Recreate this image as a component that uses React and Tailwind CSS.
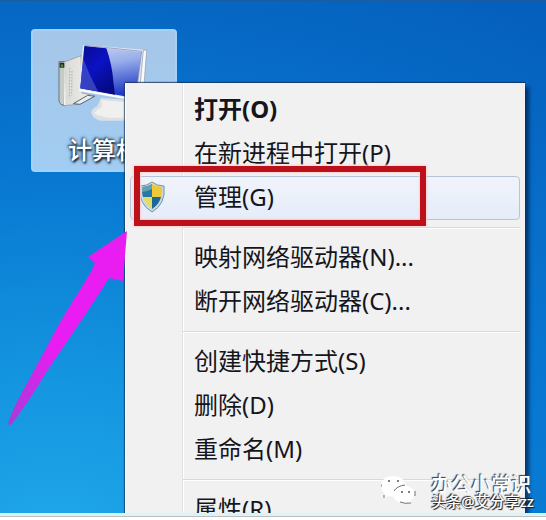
import { Fragment } from 'react';

const groups = [
	[
		{ label: '打开(O)', bold: true },
		{ label: '在新进程中打开(P)' },
		{ label: '管理(G)', shield: true, active: true },
	],
	[{ label: '映射网络驱动器(N)...' }, { label: '断开网络驱动器(C)...' }],
	[{ label: '创建快捷方式(S)' }, { label: '删除(D)' }, { label: '重命名(M)' }],
	[{ label: '属性(R)' }],
];

function ComputerIcon() {
	return (
		<svg viewBox="110 60 291 249" className="h-[83px] w-[97px]" aria-hidden="true">
			<defs>
				<linearGradient id="screen" x1="0" y1="0" x2="0.2" y2="1">
					<stop offset="0" stopColor="#c9d5f4" />
					<stop offset="0.4" stopColor="#98aeeb" />
					<stop offset="1" stopColor="#2139c4" />
				</linearGradient>
				<linearGradient id="screenDark" x1="0" y1="0" x2="0.6" y2="1">
					<stop offset="0" stopColor="#0a0a8e" />
					<stop offset="0.5" stopColor="#0b12c4" />
					<stop offset="1" stopColor="#060a86" />
				</linearGradient>
				<linearGradient id="tower" x1="0" y1="0" x2="1" y2="0">
					<stop offset="0" stopColor="#d9dad6" />
					<stop offset="1" stopColor="#f4f1ec" />
				</linearGradient>
			</defs>
			<path d="M138 122 185 104 188 216 226 224 176 250 134 254z" fill="url(#tower)" stroke="#8c9299" strokeWidth="2" />
			<path d="M119 122 137 121 135 253Q120 252 119 238z" fill="#c6cbc8" stroke="#6b7479" strokeWidth="3" />
			<path d="M137 122 136 252" stroke="#f6f6f2" strokeWidth="4" />
			<rect x="121" y="125" width="14" height="15" fill="#1e2722" />
			<circle cx="128" cy="134" r="4" fill="#5c8c3c" />
			<path d="M151 140 150 232M158 150 157 224" stroke="#b4b0ac" strokeWidth="3" strokeDasharray="5 4" />
			<path d="M162 248 205 223 226 226 182 250z" fill="#e6edf4" stroke="#59636f" strokeWidth="3" />
			<path d="M245 231 320 236V299H243Q221 294 216 277 214 264 233 256z" fill="#dce0e5" />
			<path d="M246 237 320 244V289Q262 295 224 278 232 265 248 257z" fill="#f0f0ee" />
			<path d="M191 71 382 87 370 243 176 211z" fill="#e2e6f0" />
			<path d="M372 87 382 88 370 243 358 240z" fill="#f9fafc" stroke="#8996a8" strokeWidth="2" />
			<path d="M195 75 366 93 349 232 183 202z" fill="url(#screen)" />
			<path d="M195 75 261 82Q278 130 282 181L287 221 183 202z" fill="url(#screenDark)" />
			<path d="M191 112Q210 163 236 211L183 202z" fill="#4c5ccb" opacity="0.65" />
			<path d="M195 73 367 91 349 233" fill="none" stroke="#7c7fae" strokeWidth="2" />
			<path d="M180 207 352 237" stroke="#fff" strokeWidth="4" />
		</svg>
	);
}

function ShieldIcon() {
	return (
		<svg viewBox="0 0 28 32" className="h-8 w-7" aria-hidden="true">
			<defs>
				<clipPath id="shieldInner">
					<path d="M14 3Q19 6 24 6 25 21 14 28 3 21 4 6 9 6 14 3z" />
				</clipPath>
			</defs>
			<path
				d="M14 1Q19 5 26 5 28 23 14 31 0 23 2 5 9 5 14 1z"
				fill="#c5dae5"
				stroke="#7892a4"
				strokeWidth="1"
			/>
			<g clipPath="url(#shieldInner)">
				<path d="M0 0H14V16H0z" fill="#2877a9" />
				<path d="M14 0H28V16H14z" fill="#edc838" />
				<path d="M0 16H14V32H0z" fill="#e5dc62" />
				<path d="M14 16H28V32H14z" fill="#1c6799" />
				<path d="M4 6Q9 6 14 3V8Q9 11 4 11z" fill="#79b5b4" opacity="0.7" />
			</g>
		</svg>
	);
}

function ChatLogo() {
	return (
		<svg viewBox="0 0 36 30" className="h-[30px] w-9" aria-hidden="true">
			<path d="M12 1C5 1 0 5 0 11c0 4 2 6 4 8l-1 4 5-2c9 2 17-3 17-10 0-6-6-10-13-10z" fill="#fff" />
			<path d="M24 11c-7 0-12 4-12 9s6 9 13 8l5 1-1-3c9-5 5-15-5-15z" fill="#fff" />
			<path d="M0 9v3M3 20v3M13 16Q16 11 24 10M19 27Q24 29 30 28M34 16v5" fill="none" stroke="#6c7074" strokeWidth="1" />
			<g fill="#50545a">
				<circle cx="8" cy="6" r="1" />
				<circle cx="17" cy="6" r="1" />
				<circle cx="21" cy="17" r="1" />
				<circle cx="28" cy="17" r="1" />
			</g>
		</svg>
	);
}

function MenuItem({ label, bold, shield, active }) {
	return (
		<button
			type="button"
			role="menuitem"
			className={`flex h-11 w-full items-center rounded-sm border pb-0.5 text-left text-2xl text-[#15151c] ${
				active ? 'border-[#b5c5d8] bg-linear-to-b from-[#f1f3fa] to-[#e5edf9]' : 'border-transparent'
			} ${bold ? 'font-bold' : ''}`}
		>
			<span className="flex w-[63px] shrink-0 pl-[7px]">{shield && <ShieldIcon />}</span>
			<span className="whitespace-nowrap">{label}</span>
		</button>
	);
}

function ContextMenu() {
	return (
		<div
			role="menu"
			className="absolute top-[82px] right-[21px] left-[125px] border-l border-white bg-[#f1f1f2] py-[5px] pr-[5px] pl-1 shadow-[4px_4px_4px_rgba(0,20,60,0.65),0_-1px_1px_rgba(20,50,90,0.7),-1px_0_1px_rgba(20,50,90,0.6)]"
		>
			{/* gutter line */}
			<div className="absolute inset-y-0 left-14 w-0.5 border-l border-[#e0e2e6] bg-white" />
			<div className="relative">
				{groups.map((items, i) => (
					<Fragment key={items[0].label}>
						{i > 0 && (
							<div role="separator" className="flex h-4 items-center pl-[53px]">
								<div className="h-0.5 w-full border-t border-[#d8d9dc] bg-white" />
							</div>
						)}
						{items.map((item) => (
							<MenuItem key={item.label} {...item} />
						))}
					</Fragment>
				))}
			</div>
			{/* highlight frame around the third entry */}
			<div className="pointer-events-none absolute top-[83px] left-2 h-[60px] w-[292px] border-6 border-[#bd1119] shadow-[0_0_2px_1px_#ffd0d4,inset_0_0_2px_1px_#ffd0d4]" />
		</div>
	);
}

export default function App() {
	return (
		<div className="flex h-screen flex-col overflow-hidden bg-white font-['Noto_Sans','Noto_Sans_CJK_SC',sans-serif]">
			<main className="relative flex-1 overflow-hidden border-t border-[#1c5c9c] bg-[radial-gradient(ellipse_160%_120%_at_10%_105%,#20a7e9_0%,#1496e0_25%,#0877d1_60%,#0560bd_100%)]">
				<button
					type="button"
					className="absolute top-7 left-[31px] flex h-[143px] w-[146px] flex-col items-center rounded-sm border-2 border-[#a0d2fa] bg-linear-to-b from-[#a5c6e8] to-[#a2cdf2] pt-2.5"
				>
					<ComputerIcon />
					<span className="mt-2.5 text-2xl leading-8 font-medium text-white [text-shadow:1px_2px_2px_#182a3c,-1px_-1px_2px_#304a64,0_0_4px_#304a64]">
						计算机
					</span>
				</button>

				<ContextMenu />

				<svg viewBox="0 0 130 200" className="absolute top-[228px] left-0 h-[200px] w-[130px]" aria-hidden="true">
					<defs>
						<linearGradient id="arrow" x1="1" y1="0" x2="0" y2="1">
							<stop offset="0.6" stopColor="#e91df2" />
							<stop offset="1" stopColor="#a63cd8" />
						</linearGradient>
					</defs>
					<path
						d="M127 2 88 28 95 34C90 48 68 77 49 114L20 167Q10 186 8 195L11 196Q30 171 47 142L89 80Q99 65 109 49L123 52z"
						fill="url(#arrow)"
					/>
				</svg>

				<div className="absolute right-3 bottom-0.5 flex items-start gap-3.5">
					<ChatLogo />
					<div className="flex flex-col whitespace-nowrap text-white">
						<span className="text-xl leading-5 font-medium [text-shadow:-1px_-1px_1px_#34373b]">办公小常识</span>
						<span className="-mt-1 text-[15px] leading-5 font-medium [text-shadow:-1px_-1px_1px_#17191c,1px_1px_1px_#17191c]">
							头条@艾分享zz
						</span>
					</div>
				</div>
			</main>
			<div className="h-[7px] shrink-0 border-t-3 border-[#d5f5fb]">
				<div className="h-px bg-[#bdbdb9]" />
			</div>
		</div>
	);
}
